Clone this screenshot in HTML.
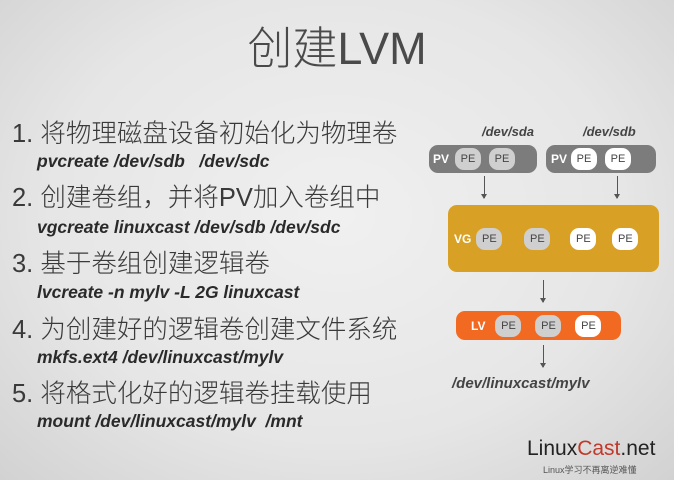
<!DOCTYPE html><html><head><meta charset="utf-8"><style>
body{margin:0;width:674px;height:480px;overflow:hidden;background:radial-gradient(ellipse at 50% 45%,#f0f0f0 0%,#e6e6e6 60%,#d2d2d2 100%);font-family:"Liberation Sans","Noto Sans CJK SC",sans-serif;position:relative;color:#333}
.a{position:absolute;white-space:nowrap}
.t{font-size:45px;color:#4a4a4a;left:0;width:674px;text-align:center;top:12px;font-weight:300}
.h{font-size:25.5px;left:12px;color:#3a3a3a;font-weight:300}
.c{font-size:17.5px;font-weight:bold;font-style:italic;left:37px;color:#2a2a2a}
.box{position:absolute;border-radius:9px;display:flex;align-items:center}
.pe{width:26px;height:22px;border-radius:9px;background:#cfcfcf;font-size:11px;color:#444;display:flex;align-items:center;justify-content:center;margin-left:5px}
.w{background:#fff}
.lbl{color:#fff;font-weight:bold;font-size:12px;margin-left:4px}
.ar{position:absolute;width:1px;background:#555}
.ar:after{content:"";position:absolute;bottom:-1px;left:-3px;border:3px solid transparent;border-top:5px solid #555;border-bottom:0}
.d{font-size:13px;font-weight:bold;font-style:italic;color:#444}
</style></head><body>
<div class="a t">创建LVM</div>
<div class="a h" style="top:113px">1. 将物理磁盘设备初始化为物理卷</div>
<div class="a c" style="top:151px">pvcreate /dev/sdb &nbsp;&nbsp;/dev/sdc</div>
<div class="a h" style="top:177px">2. 创建卷组，并将PV加入卷组中</div>
<div class="a c" style="top:217px">vgcreate linuxcast /dev/sdb /dev/sdc</div>
<div class="a h" style="top:243px">3. 基于卷组创建逻辑卷</div>
<div class="a c" style="top:282px">lvcreate -n mylv -L 2G linuxcast</div>
<div class="a h" style="top:309px">4. 为创建好的逻辑卷创建文件系统</div>
<div class="a c" style="top:347px">mkfs.ext4 /dev/linuxcast/mylv</div>
<div class="a h" style="top:373px">5. 将格式化好的逻辑卷挂载使用</div>
<div class="a c" style="top:411px">mount /dev/linuxcast/mylv &nbsp;/mnt</div>

<div class="a d" style="left:482px;top:124px">/dev/sda</div>
<div class="a d" style="left:583px;top:124px">/dev/sdb</div>
<div class="box" style="left:429px;top:145px;width:108px;height:28px;background:#7c7c7c"><span class="lbl">PV</span><span class="pe" style="margin-left:6px">PE</span><span class="pe" style="margin-left:8px">PE</span></div>
<div class="box" style="left:546px;top:145px;width:110px;height:28px;background:#7c7c7c"><span class="lbl" style="margin-left:5px">PV</span><span class="pe w" style="margin-left:4px">PE</span><span class="pe w" style="margin-left:8px">PE</span></div>
<div class="ar" style="left:484px;top:176px;height:22px"></div>
<div class="ar" style="left:617px;top:176px;height:22px"></div>
<div class="box" style="left:448px;top:205px;width:211px;height:67px;background:#d8a024"><span class="lbl" style="margin-left:6px">VG</span><span class="pe" style="margin-left:5px">PE</span><span class="pe" style="margin-left:22px">PE</span><span class="pe w" style="margin-left:20px">PE</span><span class="pe w" style="margin-left:16px">PE</span></div>
<div class="ar" style="left:543px;top:280px;height:22px"></div>
<div class="box" style="left:456px;top:311px;width:165px;height:29px;background:#f26a22"><span class="lbl" style="margin-left:15px">LV</span><span class="pe" style="margin-left:10px">PE</span><span class="pe" style="margin-left:14px">PE</span><span class="pe w" style="margin-left:14px">PE</span></div>
<div class="ar" style="left:543px;top:345px;height:22px"></div>
<div class="a d" style="left:452px;top:375px;font-size:15px">/dev/linuxcast/mylv</div>
<div class="a" style="left:527px;top:437px;font-size:21px;color:#222">Linux<span style="color:#c0392b">Cast</span>.net</div>
<div class="a" style="left:543px;top:463px;font-size:9px;color:#555">Linux学习不再离逆难懂</div>
</body></html>
